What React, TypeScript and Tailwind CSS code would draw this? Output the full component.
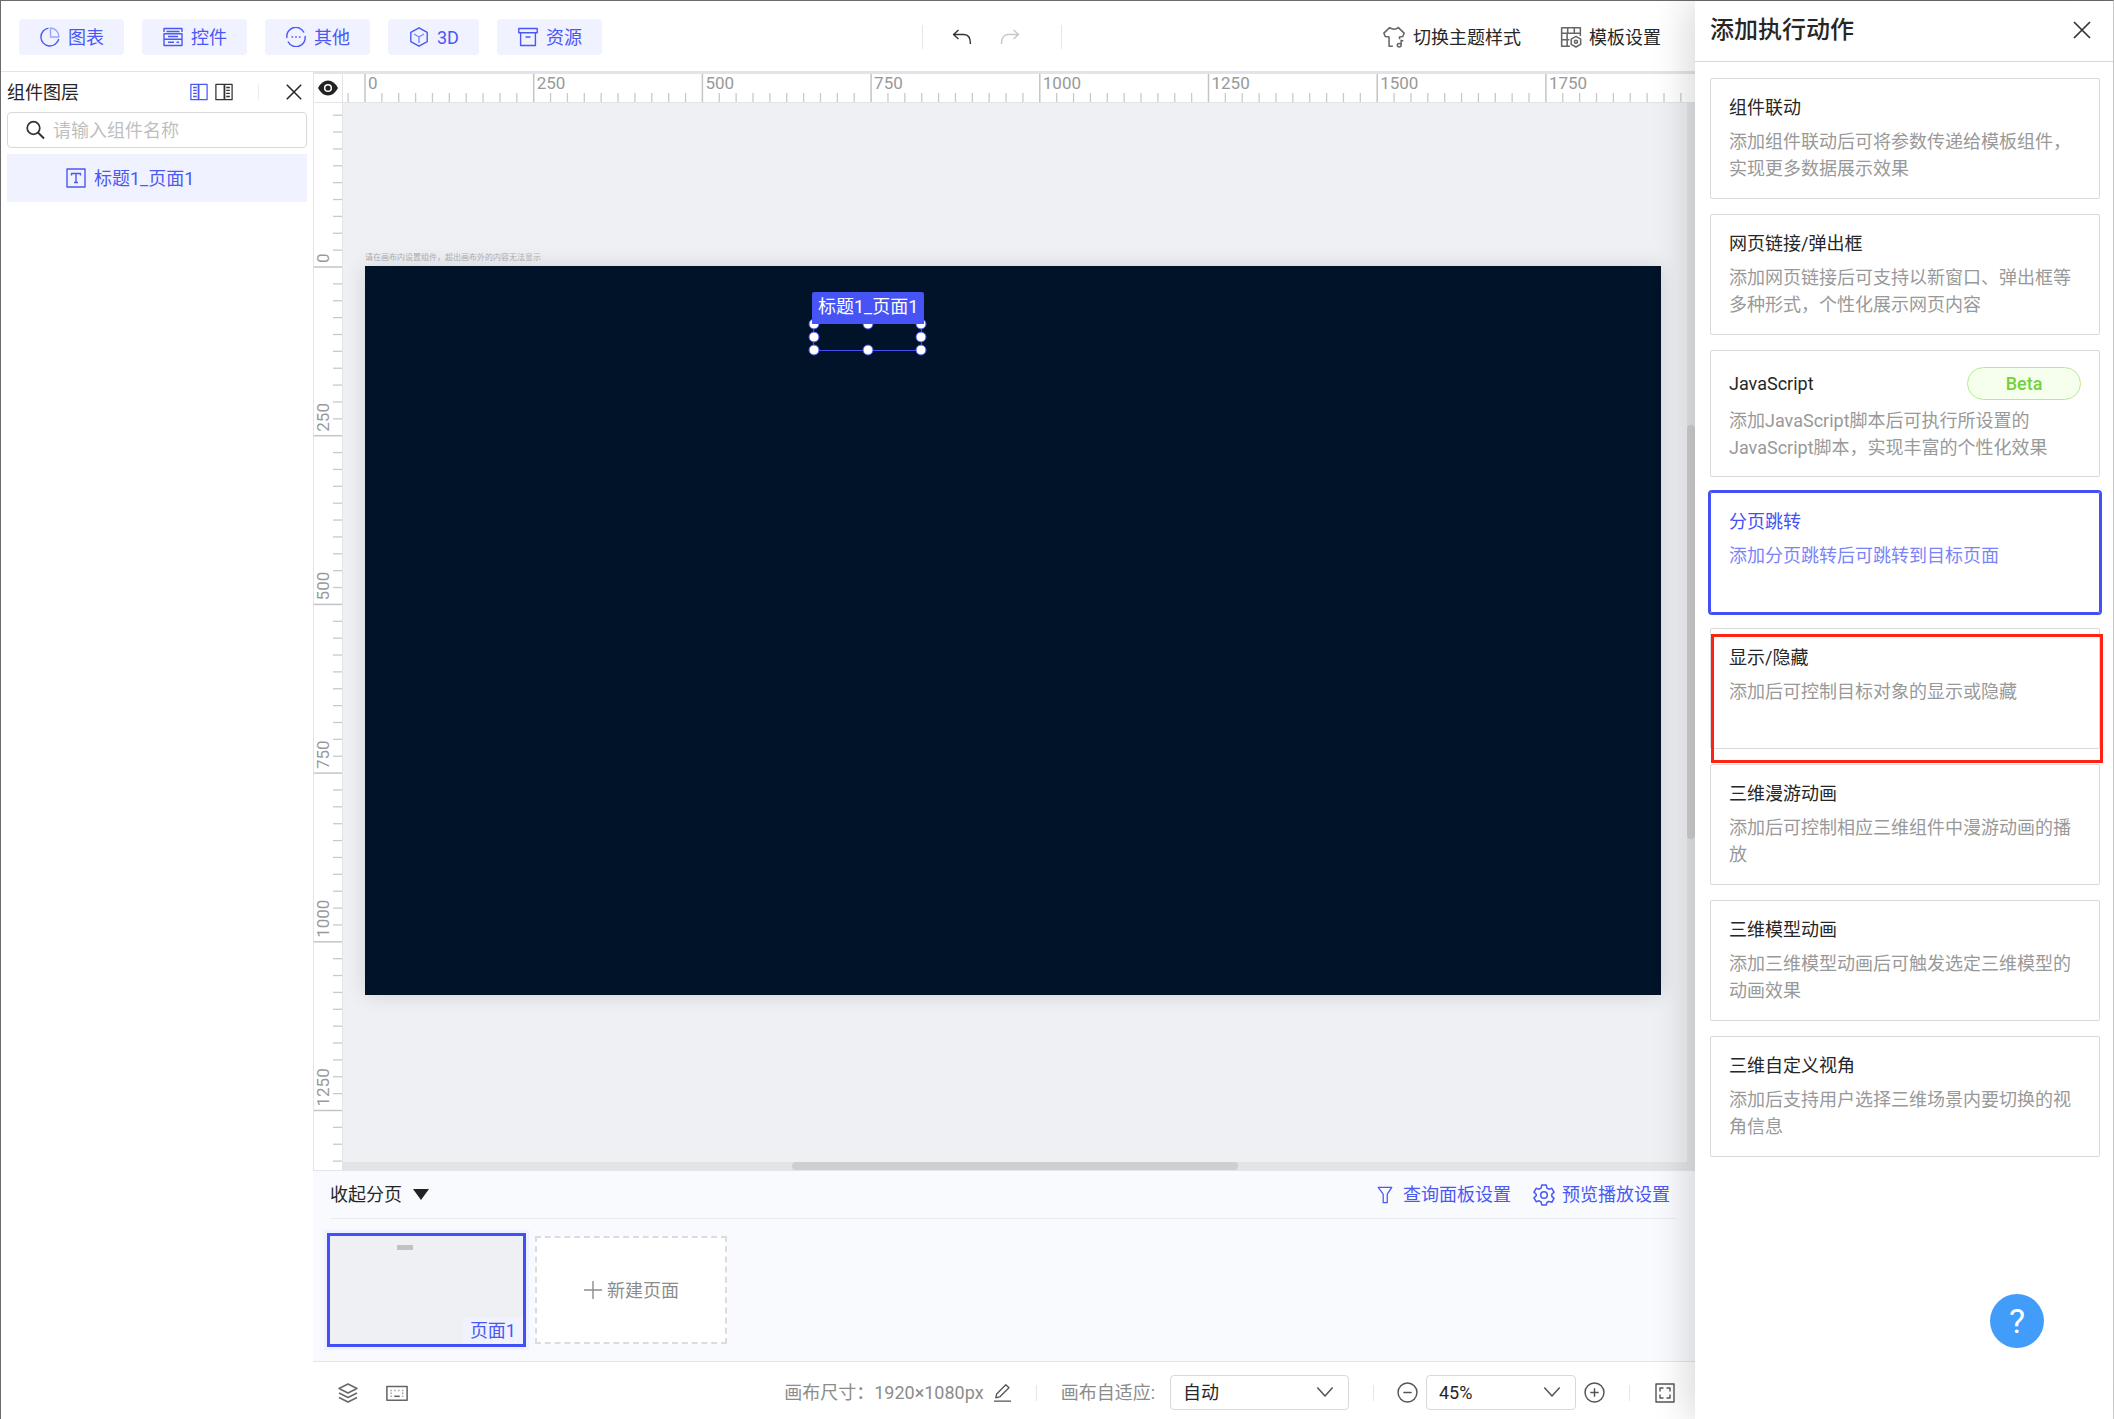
import { ReactNode } from "react";

function Icon({ children, size = 20, className = "" }: { children: ReactNode; size?: number; className?: string }) {
    return (
        <svg
            width={size}
            height={size}
            viewBox="0 0 20 20"
            fill="none"
            stroke="currentColor"
            strokeWidth="1.4"
            strokeLinejoin="round"
            className={"shrink-0 " + className}
            aria-hidden="true"
        >
            {children}
        </svg>
    );
}

const menus = [
    {
        label: "图表",
        icon: (
            <Icon>
                <path d="M8.5 1.1A9 9 0 1 0 18.7 12" />
                <path d="M10.5 1v9h8.4A8.6 8.6 0 0 0 10.5 1z" opacity="0.5" />
            </Icon>
        ),
    },
    {
        label: "控件",
        icon: (
            <Icon>
                <path d="M1 5V1.5h18V5M1 6.800h18v5.400H1zM1 12.200h18v6.300H1zM3.500 4.500h13M5 9.500h10" />
                <path d="M5 15.300h6M13.500 15.300H16" />
            </Icon>
        ),
    },
    {
        label: "其他",
        icon: (
            <Icon>
                <path d="M1 11A9 9 0 0 1 18 5.500M19 9A9 9 0 0 1 2 14.500" />
                <path d="M5.500 10h1.600M9.200 10h1.600M12.900 10h1.600" />
            </Icon>
        ),
    },
    {
        label: "3D",
        icon: (
            <Icon>
                <path d="M10 .8l8.200 4.600v9.200L10 19.200l-8.200-4.600V5.400z" />
                <path d="M5 7l5 3 5-3M10 10v6" opacity="0.7" />
            </Icon>
        ),
    },
    {
        label: "资源",
        icon: (
            <Icon>
                <path d="M.8 1.500h18.400v4.300H.8zM2.600 5.800v12.700h14.800V5.800M7.500 10h5" />
            </Icon>
        ),
    },
];

const actions = [
    { title: "组件联动", desc: "添加组件联动后可将参数传递给模板组件，实现更多数据展示效果" },
    { title: "网页链接/弹出框", desc: "添加网页链接后可支持以新窗口、弹出框等多种形式，个性化展示网页内容" },
    { title: "JavaScript", desc: "添加JavaScript脚本后可执行所设置的JavaScript脚本，实现丰富的个性化效果", beta: true },
    { title: "分页跳转", desc: "添加分页跳转后可跳转到目标页面", selected: true },
    { title: "显示/隐藏", desc: "添加后可控制目标对象的显示或隐藏", marked: true },
    { title: "三维漫游动画", desc: "添加后可控制相应三维组件中漫游动画的播放" },
    { title: "三维模型动画", desc: "添加三维模型动画后可触发选定三维模型的动画效果" },
    { title: "三维自定义视角", desc: "添加后支持用户选择三维场景内要切换的视角信息" },
];

// one tick every 25 canvas units at 45% zoom
const TICK = 16.87;

function Ruler({ vertical = false, origin, last }: { vertical?: boolean; origin: number; last: number }) {
    const ticks = Array.from({ length: last + 11 }, (_, i) => i - 10);

    return (
        <svg className="block h-full w-full overflow-hidden" aria-hidden="true">
            {ticks.map((t) => {
                const pos = origin + t * TICK;
                const major = t % 10 === 0;
                const start = major ? 0 : 19;
                const line = vertical
                    ? { x1: start, x2: 28, y1: pos, y2: pos }
                    : { x1: pos, x2: pos, y1: start, y2: 28 };
                return (
                    <g key={t}>
                        <line {...line} stroke={major ? "#c4c4c6" : "#c9c9cb"} strokeWidth={major ? 1.5 : 1.3} />
                        {major && t >= 0 && (
                            <text
                                x={vertical ? 0 : pos + 3}
                                y={vertical ? 0 : 15}
                                transform={vertical ? `translate(15 ${pos - 4}) rotate(-90)` : undefined}
                                fill="#999"
                                fontSize="17"
                            >
                                {t * 25}
                            </text>
                        )}
                    </g>
                );
            })}
        </svg>
    );
}

function Divider() {
    return <span className="h-4 w-px bg-[#e6e6e8]" />;
}

function Header() {
    return (
        <header className="flex h-[70px] items-center justify-between pt-1 pr-[34px] pb-[2px] pl-[18px]">
            <nav className="flex gap-[18px]">
                {menus.map((m) => (
                    <button
                        key={m.label}
                        className="flex h-9 items-center gap-2 rounded-sm bg-[#f0f2ff] pr-5 pl-[21px] text-[#4a58f5]"
                    >
                        {m.icon}
                        {m.label}
                    </button>
                ))}
            </nav>
            <div className="flex items-center">
                <span className="h-6 w-px bg-[#e6e6e8]" />
                <button aria-label="撤销" className="ml-[29px] text-[#333]">
                    <Icon>
                        <path d="M6.500 3L1.500 7.500l5 4.500M1.500 7.500H12q6.500 0 6.500 9.500" />
                    </Icon>
                </button>
                <button aria-label="重做" className="ml-7 text-[#c8c8c8]">
                    <Icon>
                        <path d="M13.500 3l5 4.500-5 4.500M18.500 7.500H8q-6.500 0-6.500 9.500" />
                    </Icon>
                </button>
                <span className="ml-[41px] h-6 w-px bg-[#e6e6e8]" />
            </div>
            <div className="flex gap-[39px] text-[#262626]">
                <button className="flex items-center gap-2">
                    <Icon size={22} className="text-[#666]">
                        <path d="M9 18.500H5.500V10L2 9.500.8 6.500 6 1.500q4 3 8 0l5.200 5-1.200 3-3 .5v2" />
                        <path d="M16.500 12.500v4.500M16.500 13.500h2M13 17.500a1.700 1.500 0 1 0 3.500 0 1.700 1.500 0 1 0-3.500 0" />
                    </Icon>
                    切换主题样式
                </button>
                <button className="flex items-center gap-[7px]">
                    <Icon size={22} className="text-[#666]">
                        <path d="M9 18.500H1.500v-17h17V9M1.500 6.500h17M6.500 6.500v12M1.500 12.500h7M7 1.500v5M13 1.500v5" />
                        <path d="M14.500 9.500l4.300 2.400v4.800l-4.300 2.400-4.300-2.400v-4.800z" />
                        <circle cx="14.500" cy="14.300" r="1.400" />
                    </Icon>
                    模板设置
                </button>
            </div>
        </header>
    );
}

function LayerPanel() {
    return (
        <aside className="w-[312px] shrink-0 border-t border-[#e3e4ea] pr-[6px] pl-[6px]">
            <div className="flex h-10 items-center pr-1">
                <h2 className="flex-1 text-[#262626]">组件图层</h2>
                <button aria-label="左侧布局" className="text-[#4a58f5]">
                    <Icon size={18}>
                        <path d="M1 1.500h18v17H1z" />
                        <path d="M9.500 1.500v17" strokeWidth="2" />
                        <path d="M3.500 5h4M3.500 8.300h4M3.500 11.600h4M3.500 15h4" />
                    </Icon>
                </button>
                <button aria-label="右侧布局" className="ml-[7px] text-[#333]">
                    <Icon size={18}>
                        <path d="M1 1.500h18v17H1z" />
                        <path d="M10.500 1.500v17" strokeWidth="2" />
                        <path d="M12.500 5h4M12.500 8.300h4M12.500 11.600h4M12.500 15h4" />
                    </Icon>
                </button>
                <span className="ml-[25px] h-4 w-px bg-[#ececee]" />
                <button aria-label="关闭图层" className="ml-[26px] text-[#262626]">
                    <Icon size={18}>
                        <path d="M2 2l16 16M18 2L2 18" strokeWidth="1.700" />
                    </Icon>
                </button>
            </div>
            <label className="flex h-9 items-center gap-2 rounded-sm border border-[#d9d9d9] pl-[17px]">
                <Icon className="text-[#333]">
                    <circle cx="8.500" cy="8" r="6.300" strokeWidth="1.700" />
                    <path d="M13 12.500l6 6" strokeWidth="2" />
                </Icon>
                <input
                    aria-label="搜索组件"
                    placeholder="请输入组件名称"
                    className="w-full min-w-0 bg-transparent outline-none placeholder:text-[#bfbfbf]"
                />
            </label>
            <ul>
                <li className="mt-[6px] flex h-12 items-center gap-2 bg-[#f0f2ff] pl-[59px] text-[#4a58f5]">
                    <Icon>
                        <path d="M1 1h18v18H1zM5.500 7.500V5.500h9v2M10 5.500v9M8 14.500h4" />
                    </Icon>
                    标题1_页面1
                </li>
            </ul>
        </aside>
    );
}

const handles = [
    "left-0 top-0",
    "left-1/2 top-0",
    "left-full top-0",
    "left-0 top-1/2",
    "left-full top-1/2",
    "left-0 top-full",
    "left-1/2 top-full",
    "left-full top-full",
];

function Workspace() {
    return (
        <div className="flex min-h-0 flex-1 flex-col border-l border-[#e3e4ea]">
            <div className="flex h-[29px] shrink-0 border-b border-[#e3e4ea]">
                <button aria-label="显示辅助线" className="flex w-7 shrink-0 items-center justify-center">
                    <svg width="20" height="16" viewBox="0 0 20 16" aria-hidden="true">
                        <path d="M0 8Q4 .5 10 .5T20 8q-4 7.500-10 7.500T0 8z" fill="#222" />
                        <circle cx="10" cy="8" r="3.300" fill="#222" stroke="#fff" strokeWidth="1.500" />
                    </svg>
                </button>
                <div className="min-w-0 flex-1 border-l border-[#e3e4ea]">
                    <Ruler origin={22} last={79} />
                </div>
            </div>
            <div className="flex min-h-0 flex-1">
                <div className="w-7 shrink-0">
                    <Ruler vertical origin={164} last={56} />
                </div>
                <div className="flex min-w-0 flex-1 flex-col border-l border-[#e3e4ea] bg-[#eff0f4]">
                    <div className="flex min-h-0 flex-1">
                        <div className="min-w-0 flex-1 overflow-hidden pt-[149px] pr-[26px] pl-[22px]">
                            <p className="h-[14px] text-[8px] leading-[12px] text-[#b0b0b3]">
                                请在画布内设置组件，超出画布外的内容无法显示
                            </p>
                            <div className="relative aspect-video w-full bg-[#011329] shadow-[0_0_20px_rgba(0,0,0,0.12)]">
                                <div className="absolute top-[57px] left-[448px] h-[28px] w-[109px] border border-[#4350f0]">
                                    {handles.map((pos) => (
                                        <i
                                            key={pos}
                                            className={
                                                "absolute size-[11px] -translate-1/2 rounded-full border border-[#4350f0] bg-white " + pos
                                            }
                                        />
                                    ))}
                                    <span className="absolute bottom-full -left-[2px] h-8 rounded-t-xs bg-[#4653f5] px-[6px] leading-[29px] whitespace-nowrap text-white">
                                        标题1_页面1
                                    </span>
                                </div>
                            </div>
                        </div>
                        <div className="w-2 bg-[#e3e4e6] pt-[322px]">
                            <div className="h-[414px] rounded-full bg-[#cfcfd1]" />
                        </div>
                    </div>
                    <div className="h-2 bg-[#e3e4e6]">
                        <div className="ml-[449px] h-2 w-[33%] rounded-full bg-[#cfcfd1]" />
                    </div>
                </div>
            </div>
        </div>
    );
}

function Pager() {
    return (
        <div className="h-[192px] shrink-0 border-y border-[#e3e4ea] bg-[#f9fafd]">
            <div className="mr-[18px] ml-[17px] flex h-12 items-center border-b border-[#eaebee]">
                <button className="flex items-center gap-[11px] text-[#262626]">
                    收起分页
                    <svg width="16" height="11" viewBox="0 0 16 11" aria-hidden="true">
                        <path d="M0 0h16L8 11z" fill="#222" />
                    </svg>
                </button>
                <div className="mr-[7px] ml-auto flex gap-[22px] text-[#4a58f5]">
                    <button className="flex items-center gap-[9px]">
                        <Icon size={18}>
                            <path d="M2.500 1.500h15l-5 7.500v9.500h-4.500V9z" />
                        </Icon>
                        查询面板设置
                    </button>
                    <button className="flex items-center gap-[7px]">
                        <Icon size={22}>
                            <path d="M8 1h4l.7 2.700 1.700 1 2.700-.8 2 3.500-2 1.900v1.900l2 1.900-2 3.500-2.700-.8-1.700 1L12 19H8l-.7-2.700-1.700-1-2.700.8-2-3.500 2-1.900V9.300l-2-1.900 2-3.500 2.700.8 1.700-1z" />
                            <circle cx="10" cy="10" r="3" />
                        </Icon>
                        预览播放设置
                    </button>
                </div>
            </div>
            <div className="flex gap-[9px] pt-[14px] pl-[14px]">
                <button className="flex h-[114px] w-[199px] flex-col justify-between border-[3px] border-[#4350f5] bg-[#eff0f4] ring-3 ring-[#f0f2ff]">
                    <span className="mt-[9px] ml-[67px] h-[5px] w-4 bg-[#c2c2c4]" />
                    <span className="self-end bg-[#f0f2ff] px-[7px] leading-[27px] text-[#4a58f5]">页面1</span>
                </button>
                <button className="mt-[3px] flex h-[108px] w-[192px] items-center justify-center gap-1 border-2 border-dashed border-[#dcdcde] bg-white text-[#8c8c8c]">
                    <Icon>
                        <path d="M1 10h18M10 1v18" />
                    </Icon>
                    新建页面
                </button>
            </div>
        </div>
    );
}

function Select({ label, value, options, className }: { label: string; value: string; options: string[]; className: string }) {
    return (
        <span className={"relative " + className}>
            <select
                aria-label={label}
                defaultValue={value}
                className="h-[35px] w-full appearance-none rounded-sm border border-[#d9d9d9] bg-white pl-3 text-[#262626]"
            >
                {options.map((o) => (
                    <option key={o}>{o}</option>
                ))}
            </select>
            <Icon size={18} className="pointer-events-none absolute top-2 right-[15px] text-[#555]">
                <path d="M1.500 5l8.500 9.500L18.500 5" strokeWidth="1.700" />
            </Icon>
        </span>
    );
}

function StatusBar() {
    return (
        <footer className="flex h-[57px] shrink-0 items-center pt-1 pr-[20px] pl-[25px] text-[#8c8c8c]">
            <button aria-label="图层" className="text-[#666]">
                <Icon>
                    <path d="M10 1l9 4.500L10 10 1 5.500zM1 10l9 4.500 9-4.500M1 14.500L10 19l9-4.500" />
                </Icon>
            </button>
            <button aria-label="快捷键" className="ml-7 text-[#666]">
                <Icon size={22}>
                    <path d="M.8 4h18.400v12.500H.8z" />
                    <path d="M4 7.700h1.300M7.500 7.700h1.300M11 7.700h1.300M14.500 7.700h1.300M4 10.300h1.300M14.500 10.300h1.300M4 13h1.300M14.500 13h1.300" opacity="0.6" />
                    <path d="M7.500 13h5" />
                </Icon>
            </button>
            <div className="ml-auto flex items-center">
                <span>画布尺寸：1920×1080px</span>
                <button aria-label="修改画布尺寸" className="mr-6 ml-[9px] text-[#555]">
                    <Icon size={19}>
                        <path d="M3 15.500l.8-4L13.500 1.800l3.300 3.200L7 14.700zM1 19h18" />
                    </Icon>
                </button>
                <Divider />
                <span className="mr-[15px] ml-6">画布自适应:</span>
                <Select label="画布自适应" value="自动" options={["自动", "宽度", "高度"]} className="mr-6 w-[179px]" />
                <Divider />
                <button aria-label="缩小" className="mr-2 ml-[23px] text-[#555]">
                    <Icon size={21}>
                        <circle cx="10" cy="10" r="9" />
                        <path d="M6 10h8" />
                    </Icon>
                </button>
                <Select label="缩放比例" value="45%" options={["45%", "75%", "100%"]} className="w-[150px]" />
                <button aria-label="放大" className="mr-6 ml-2 text-[#555]">
                    <Icon size={21}>
                        <circle cx="10" cy="10" r="9" />
                        <path d="M6 10h8M10 6v8" />
                    </Icon>
                </button>
                <Divider />
                <button aria-label="全屏" className="ml-[25px] text-[#555]">
                    <Icon size={20}>
                        <path d="M1 1h18v18H1zM5 8.500V5h3.500M11.500 5H15v3.500M15 11.500V15h-3.500M8.500 15H5v-3.500" />
                    </Icon>
                </button>
            </div>
        </footer>
    );
}

function ActionDrawer() {
    return (
        <aside className="relative z-10 w-[418px] shrink-0 bg-white shadow-[-6px_0_36px_rgba(0,0,0,0.16)]">
            <div className="flex h-[61px] items-center justify-between border-b border-[#d9d9d9] pr-[21px] pb-[2px] pl-[15px]">
                <h1 className="text-2xl font-medium text-[#262626]">添加执行动作</h1>
                <button aria-label="关闭" className="text-[#333]">
                    <Icon size={20}>
                        <path d="M2 2l16 16M18 2L2 18" strokeWidth="1.700" />
                    </Icon>
                </button>
            </div>
            <div className="flex flex-col gap-[15px] pt-4 pr-[13px] pl-[15px]">
                {actions.map((a) => (
                    <button
                        key={a.title}
                        className={
                            "relative flex flex-col gap-[7px] rounded-xs border px-[18px] text-left leading-[27px] " +
                            (a.beta ? "min-h-[127px] pt-4 pb-[15px] " : "min-h-[121px] pt-[15px] pb-[15px] ") +
                            (a.selected ? "border-[#4350f5] ring-2 ring-[#4350f5]" : "border-[#d9d9d9]")
                        }
                    >
                        <span
                            className={"flex w-full items-center justify-between " + (a.selected ? "text-[#4350f5]" : "text-[#262626]")}
                        >
                            {a.title}
                            {a.beta && (
                                <span className="h-[33px] w-[114px] rounded-full border border-[#b7eb8f] bg-[#f6ffed] text-center leading-[31px] font-medium text-[#73d13d]">
                                    Beta
                                </span>
                            )}
                        </span>
                        <span className={a.selected ? "text-[#7a84f8]" : "text-[#999]"}>{a.desc}</span>
                        {a.marked && (
                            <span className="pointer-events-none absolute top-[5px] -right-1 -bottom-[15px] left-0 z-10 border-3 border-[#ff2313]" />
                        )}
                    </button>
                ))}
            </div>
            <button
                aria-label="帮助"
                className="absolute right-[69px] bottom-[71px] flex size-[54px] items-center justify-center rounded-full bg-[#429cf9] text-[34px] text-white"
            >
                ?
            </button>
        </aside>
    );
}

export default function App() {
    return (
        <div className="flex h-screen min-h-[1200px] border-t border-r border-l border-t-[#6b6b6f] border-r-[#d0d0d0] border-l-[#6b6b6f] bg-white font-[Roboto,'Noto_Sans_CJK_SC',sans-serif] text-lg leading-[27px]">
            <div className="flex min-w-0 flex-1 flex-col">
                <Header />
                <div className="flex min-h-0 flex-1">
                    <LayerPanel />
                    <main className="flex min-w-0 flex-1 flex-col border-t-3 border-[#e3e4ea]">
                        <Workspace />
                        <Pager />
                        <StatusBar />
                    </main>
                </div>
            </div>
            <ActionDrawer />
        </div>
    );
}
